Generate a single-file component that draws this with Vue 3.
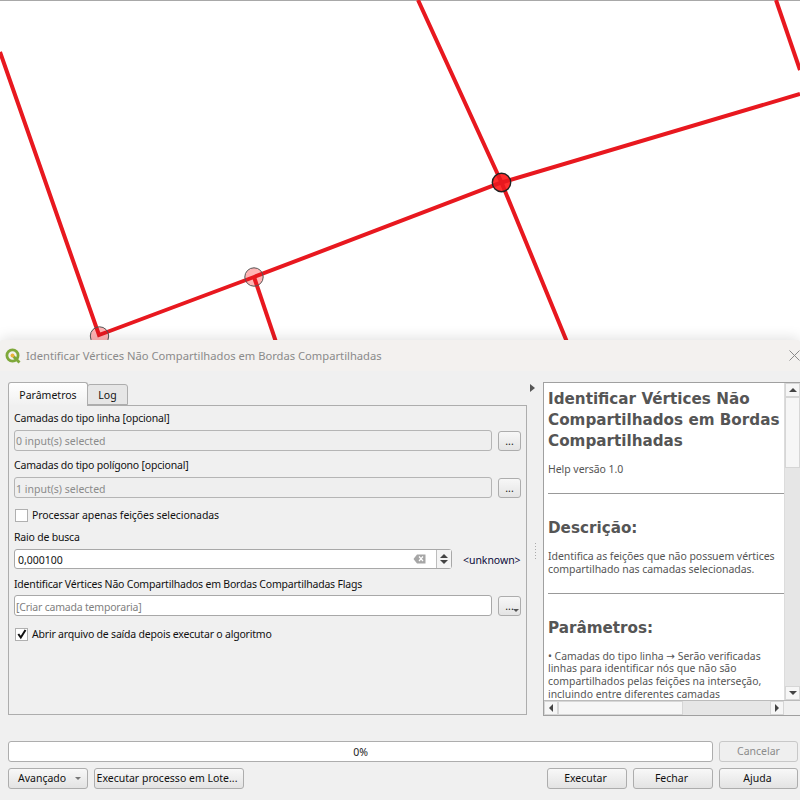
<script setup>
const paths = [
  'M0 52 L99 335 L254 277 L501.500 182.500 L800 94',
  'M418 0 L501.500 182.500 L567 342',
  'M254 277 L276 342',
  'M776 0 L800 70'
]
const vertices = [
  { x: 99.5, y: 336, fill: '#ffb4b4', stroke: '#555', w: 1 },
  { x: 254, y: 277, fill: '#ffb4b4', stroke: '#555', w: 1 },
  { x: 501.5, y: 182.5, fill: '#ff2e2e', stroke: '#222', w: 1.4 }
]
</script>

<template>
  <div class="page">
    <svg class="map" width="800" height="340" viewBox="0 0 800 340">
      <rect x="0" y="0" width="800" height="1" fill="#a8a8a8" />
      <circle v-for="(v, i) in vertices" :key="'f' + i" :cx="v.x" :cy="v.y" r="9.2" :fill="v.fill" />
      <path v-for="(d, i) in paths" :key="i" :d="d" fill="none" stroke="#e8181f" stroke-width="4" />
      <circle v-for="(v, i) in vertices" :key="'o' + i" :cx="v.x" :cy="v.y" r="9.2" fill="none" :stroke="v.stroke" :stroke-width="v.w" />
    </svg>

    <section class="dialog">
      <header class="titlebar">
        <svg class="logo" width="16" height="16" viewBox="0 0 16 16">
          <circle cx="7.500" cy="7.500" r="5.600" fill="none" stroke="#7fa83a" stroke-width="2.800" />
          <path d="M8.500 8.500 L14.500 14.500" stroke="#7fa83a" stroke-width="2.800" />
          <circle cx="7.500" cy="7.500" r="2" fill="#e8b23c" />
        </svg>
        <span class="title">Identificar Vértices Não Compartilhados em Bordas Compartilhadas</span>
        <svg class="close" width="11" height="11" viewBox="0 0 11 11">
          <path d="M0.500 0.500 L10.500 10.500 M10.500 0.500 L0.500 10.500" stroke="#8a8a8a" stroke-width="1" />
        </svg>
      </header>

      <div class="content">
        <div class="left">
          <div class="tabs">
            <div class="tab active">Parâmetros</div>
            <div class="tab">Log</div>
          </div>
          <div class="pane">
            <label class="lbl first">Camadas do tipo linha [opcional]</label>
            <div class="field-row">
              <div class="input disabled">0 input(s) selected</div>
              <button class="dots">...</button>
            </div>
            <label class="lbl second">Camadas do tipo polígono [opcional]</label>
            <div class="field-row">
              <div class="input disabled low">1 input(s) selected</div>
              <button class="dots">...</button>
            </div>
            <div class="check-row one">
              <span class="check"></span>
              <span>Processar apenas feições selecionadas</span>
            </div>
            <label class="lbl third">Raio de busca</label>
            <div class="spin-row">
              <div class="spin">
                <span class="spin-value">0,000100</span>
                <svg class="clear" width="13" height="10" viewBox="0 0 13 10">
                  <path d="M4 0.500 H12.500 V9.500 H4 L0.500 5 Z" fill="#a6a6a6" />
                  <path d="M6 2.500 L10 7 M10 2.500 L6 7" stroke="#fff" stroke-width="1.200" />
                </svg>
                <div class="spin-btns">
                  <span class="up"></span>
                  <span class="down"></span>
                </div>
              </div>
              <span class="unit">&lt;unknown&gt;</span>
            </div>
            <label class="lbl fourth">Identificar Vértices Não Compartilhados em Bordas Compartilhadas Flags</label>
            <div class="field-row">
              <div class="input placeholder low">[Criar camada temporaria]</div>
              <button class="dots menu">...<i class="caret"></i></button>
            </div>
            <div class="check-row two">
              <span class="check">
                <svg width="12" height="12" viewBox="0 0 12 12">
                  <path d="M2.300 6 L4.800 9.500 L9.500 2" fill="none" stroke="#111" stroke-width="2" />
                </svg>
              </span>
              <span>Abrir arquivo de saída depois executar o algoritmo</span>
            </div>
          </div>
        </div>

        <div class="splitter">
          <i class="collapse"></i>
          <i class="grip"></i>
        </div>

        <div class="help">
          <div class="help-main">
            <div class="help-text">
              <h2 class="h-title">Identificar Vértices Não Compartilhados em Bordas Compartilhadas</h2>
              <p class="ver">Help versão 1.0</p>
              <hr class="rule r1" />
              <h3 class="h-sec s1">Descrição:</h3>
              <p class="desc">Identifica as feições que não possuem vértices compartilhado nas camadas selecionadas.</p>
              <hr class="rule r2" />
              <h3 class="h-sec s2">Parâmetros:</h3>
              <p class="desc params">• Camadas do tipo linha → Serão verificadas linhas para identificar nós que não são compartilhados pelas feições na interseção, incluindo entre diferentes camadas</p>
            </div>
            <div class="vbar">
              <div class="sb-btn"><i class="tri t-up"></i></div>
              <div class="v-thumb"></div>
              <div class="v-track"></div>
              <div class="sb-btn"><i class="tri t-down"></i></div>
            </div>
          </div>
          <div class="hbar">
            <div class="sb-btn h"><i class="tri t-left"></i></div>
            <div class="h-thumb"></div>
            <div class="h-track"></div>
            <div class="sb-btn h"><i class="tri t-right"></i></div>
            <div class="corner"></div>
          </div>
        </div>
      </div>

      <div class="progress-row">
        <div class="progress">0%</div>
        <button class="btn off">Cancelar</button>
      </div>
      <div class="button-row">
        <button class="btn adv">Avançado<i class="caret big"></i></button>
        <button class="btn batch">Executar processo em Lote...</button>
        <span class="spacer"></span>
        <button class="btn wide">Executar</button>
        <button class="btn wide">Fechar</button>
        <button class="btn wide last">Ajuda</button>
      </div>
    </section>
  </div>
</template>

<style>
html, body { margin: 0; background: #fff; }
</style>

<style scoped>
.page {
  width: 800px;
  height: 800px;
  overflow: hidden;
  font-family: "Noto Sans", "Open Sans", sans-serif;
  font-size: 10.5px;
  color: #111;
  background: #fff;
}
.map { display: block; }
.dialog {
  position: relative;
  height: 460px;
  background: #f0f0f0;
  border-radius: 4px 4px 0 0;
  box-shadow: 0 -2px 14px rgba(0, 0, 0, 0.12);
  display: flex;
  flex-direction: column;
}
.titlebar {
  height: 31px;
  flex: none;
  background: #f3f1ef;
  display: flex;
  align-items: center;
  padding: 0 0 0 5px;
  border-radius: 4px 4px 0 0;
}
.logo { flex: none; margin-right: 5px; }
.title { font-size: 11.2px; color: #8a8a8a; flex: 1; }
.close { flex: none; }
.content {
  height: 344px;
  flex: none;
  padding-top: 11px;
  box-sizing: border-box;
  display: flex;
}
.left { width: 519px; margin-left: 8px; flex: none; display: flex; flex-direction: column; height: 333px; }
.tabs { display: flex; height: 23px; flex: none; align-items: flex-end; position: relative; z-index: 1; }
.tab {
  box-sizing: border-box;
  width: 41px;
  height: 21px;
  border: 1px solid #adadad;
  border-radius: 3px 3px 0 0;
  background: #e6e6e6;
  text-align: center;
  line-height: 21px;
  margin-left: -1px;
}
.tab.active {
  width: 80px;
  height: 24px;
  margin-left: 0;
  margin-bottom: -1px;
  border-bottom: 0;
  line-height: 25px;
  background: linear-gradient(#fff, #f0f0f0);
  position: relative;
  z-index: 2;
}
.pane {
  flex: 1;
  box-sizing: border-box;
  border: 1px solid #adadad;
  padding: 0 5px;
  display: flex;
  flex-direction: column;
}
.lbl { display: block; line-height: 14px; white-space: nowrap; letter-spacing: -0.2px; }
.lbl.first { margin-top: 5px; margin-bottom: 5px; }
.lbl.second { margin-top: 7px; margin-bottom: 5px; }
.lbl.third { margin-top: 8px; margin-bottom: 5px; }
.lbl.fourth { margin-top: 8px; margin-bottom: 4px; }
.field-row { display: flex; gap: 6px; height: 21px; flex: none; }
.input {
  box-sizing: border-box;
  width: 478px;
  height: 21px;
  flex: none;
  border: 1px solid #a8a8a8;
  border-radius: 3px;
  background: #fff;
  line-height: 19px;
  padding: 1px 0 0 1px;
}
.input.low { padding-top: 2px; line-height: 17px; margin: 0; position: static; }
.input.low { line-height: 19px; height: 21px; }
.input.disabled { background: #efefef; color: #8b8b8b; border-color: #b5b5b5; }
.input.placeholder { color: #7f7f7f; letter-spacing: -0.2px; }
.dots {
  box-sizing: border-box;
  width: 23px;
  height: 20px;
  flex: none;
  align-self: flex-end;
  padding: 0;
  border: 1px solid #adadad;
  border-radius: 3px;
  background: linear-gradient(#f7f7f7, #e4e4e4);
  font: inherit;
  line-height: 18px;
  color: #222;
  position: relative;
}
.caret {
  position: absolute;
  right: 1px;
  bottom: 3px;
  width: 0;
  height: 0;
  border: 3px solid transparent;
  border-top: 3px solid #555;
  border-bottom: 0;
}
.check-row { display: flex; align-items: center; gap: 5px; height: 14px; flex: none; }
.check-row.one { margin-top: 10px; letter-spacing: -0.08px; }
.check-row.two { margin-top: 11px; letter-spacing: -0.2px; }
.check {
  box-sizing: border-box;
  width: 13px;
  height: 13px;
  flex: none;
  border: 1px solid #b0b0b0;
  background: #fff;
  display: flex;
  padding: 0;
  margin-left: 1px;
  margin-right: -1px;
}
.check svg { display: block; flex: none; margin: -0.5px; }
.spin-row { display: flex; height: 20px; flex: none; align-items: center; }
.spin {
  box-sizing: border-box;
  width: 438px;
  height: 20px;
  flex: none;
  border: 1px solid #a8a8a8;
  border-radius: 3px;
  background: #fff;
  display: flex;
  align-items: center;
  padding-left: 3px;
}
.spin-value { flex: 1; padding-top: 2px; }
.clear { flex: none; margin-right: 10px; }
.spin-btns {
  width: 14px;
  height: 18px;
  flex: none;
  border-left: 1px solid #bdbdbd;
  display: flex;
  flex-direction: column;
  align-items: center;
  justify-content: center;
  gap: 2px;
  background: #f4f4f4;
}
.up, .down { width: 0; height: 0; border: 4px solid transparent; }
.up { border-bottom: 4px solid #444; border-top: 0; }
.down { border-top: 4px solid #444; border-bottom: 0; }
.unit { margin-left: 11px; white-space: nowrap; color: #0a0a3a; letter-spacing: -0.05px; padding-top: 2px; }
.splitter { width: 16px; flex: none; position: relative; }
.collapse {
  position: absolute;
  left: 3px;
  top: 2px;
  width: 0;
  height: 0;
  border: 4px solid transparent;
  border-left: 5px solid #555;
  border-right: 0;
}
.grip {
  position: absolute;
  left: 8px;
  top: 161px;
  width: 1px;
  height: 18px;
  background: repeating-linear-gradient(#aaa 0 1px, transparent 1px 3px);
}
.help {
  width: 257px;
  height: 334px;
  flex: none;
  box-sizing: border-box;
  border: 1px solid #a0a0a0;
  border-right: 0;
  background: #fff;
  display: flex;
  flex-direction: column;
}
.help-main { flex: 1; min-height: 0; display: flex; }
.help-text { flex: 1; min-width: 0; overflow: hidden; padding: 0 0 0 4px; color: #555; letter-spacing: -0.05px; }
.h-title { margin: 6px 0 0; font: bold 15.2px/21px "DejaVu Sans", sans-serif; color: #555; letter-spacing: 0; }
.ver { margin: 11px 0 0; line-height: 13px; }
.rule { border: 0; height: 1px; background: #999; margin: 0; }
.r1 { margin-top: 17px; }
.r2 { margin-top: 17px; }
.h-sec { margin: 0; font: bold 15.2px/20px "DejaVu Sans", sans-serif; color: #555; letter-spacing: 0; }
.s1 { margin-top: 24px; }
.s2 { margin-top: 24px; }
.desc { margin: 12px 0 0; line-height: 13px; }
.desc.params {
  margin-top: 11.6px;
  line-height: 12.8px;
  letter-spacing: 0;
  font-size: 10.4px;
  font-family: "Noto Sans", "DejaVu Sans", sans-serif;
}
.vbar { width: 16px; flex: none; display: flex; flex-direction: column; background: #e6e6e6; border-left: 1px solid #dcdcdc; box-sizing: border-box; }
.sb-btn { height: 14px; flex: none; background: #f6f6f6; display: flex; align-items: center; justify-content: center; border: 1px solid #d6d6d6; box-sizing: border-box; }
.sb-btn.h { width: 14px; height: 14px; }
.v-thumb { height: 71px; flex: none; background: #f6f6f6; border: 1px solid #d6d6d6; box-sizing: border-box; }
.v-track { flex: 1; }
.hbar { height: 14px; flex: none; display: flex; background: #e6e6e6; border-top: 1px solid #bbb; }
.h-thumb { width: 125px; flex: none; background: #f6f6f6; border: 1px solid #d6d6d6; box-sizing: border-box; }
.h-track { flex: 1; }
.corner { width: 16px; flex: none; background: #f0f0f0; }
.tri { width: 0; height: 0; border: 4px solid transparent; display: block; }
.t-up { border-bottom: 4px solid #444; border-top: 0; }
.t-down { border-top: 4px solid #444; border-bottom: 0; }
.t-left { border-right: 4px solid #444; border-left: 0; }
.t-right { border-left: 4px solid #444; border-right: 0; }
.progress-row { display: flex; gap: 6px; margin: 26px 0 0 8px; height: 21px; flex: none; }
.progress {
  box-sizing: border-box;
  width: 705px;
  height: 21px;
  flex: none;
  border: 1px solid #adadad;
  border-radius: 3px;
  background: #fff;
  text-align: center;
  line-height: 20px;
  color: #222;
}
.button-row { display: flex; gap: 6px; margin: 6px 0 0 8px; height: 21px; flex: none; }
.btn {
  box-sizing: border-box;
  height: 21px;
  flex: none;
  padding: 0;
  border: 1px solid #adadad;
  border-radius: 3px;
  background: linear-gradient(#f8f8f8, #e3e3e3);
  font: inherit;
  color: #111;
  line-height: 19px;
  position: relative;
}
.wide { width: 80px; padding-right: 3px; }
.wide.last { width: 79px; padding-right: 2px; }
.btn.off { width: 79px; background: #efefef; color: #8b8b8b; border-color: #c8c8c8; }
.adv { width: 80px; text-align: left; padding-left: 9px; }
.batch { width: 150px; padding-right: 4px; }
.spacer { width: 291px; flex: none; }
.caret.big { right: 6px; bottom: 8px; border-top-color: #777; }
</style>
